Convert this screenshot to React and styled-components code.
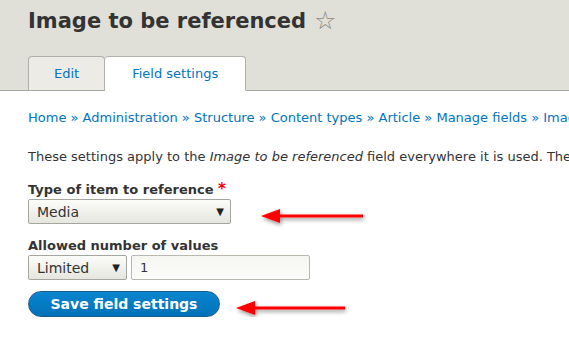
import React from "react";
import styled, { createGlobalStyle } from "styled-components";

const GlobalStyle = createGlobalStyle`
    body {
        margin: 0;
        background: #fff;
        font-family: "DejaVu Sans", "Liberation Sans", sans-serif;
        color: #333;
        overflow: hidden;
    }
`;

// red annotation arrow, its middle sits 17px down from the top of the row
function Arrow({ length }) {
    return (
        <ArrowSvg width={length + 8} height="25" viewBox={`0 0 ${length + 8} 25`}>
            <defs>
                <filter id="shadow" x="-20%" y="-80%" width="140%" height="260%">
                    <feDropShadow dx="1" dy="2" stdDeviation="2" floodColor="#000" floodOpacity="0.45" />
                </filter>
            </defs>
            <g filter="url(#shadow)">
                <rect x="16" y="15.5" width={length - 14} height="3" fill="#f00" />
                <polygon points="2,17 21,10 21,24" fill="#f00" />
            </g>
        </ArrowSvg>
    );
}

function App() {
    return (
        <>
            <GlobalStyle />
            <Header>
                <Title>
                    Image to be referenced <Star>☆</Star>
                </Title>
                <Tabs>
                    <Tab>Edit</Tab>
                    <Tab active>Field settings</Tab>
                </Tabs>
            </Header>
            <Content>
                <Breadcrumb>
                    Home » Administration » Structure » Content types » Article » Manage fields » Image to be referenced
                </Breadcrumb>
                <Description>
                    These settings apply to the <em>Image to be referenced</em> field everywhere it is used. These settings impact the way that data is stored
                </Description>
                <Label>
                    Type of item to reference <Required>*</Required>
                </Label>
                <Row>
                    <Select width="203px">
                        Media <Caret>▼</Caret>
                    </Select>
                    <ArrowSlot left="28px">
                        <Arrow length={102} />
                    </ArrowSlot>
                </Row>
                <Label top="13px">Allowed number of values</Label>
                <Row gap="4px">
                    <Select width="99px">
                        Limited <Caret>▼</Caret>
                    </Select>
                    <Input>1</Input>
                </Row>
                <Row top="11px">
                    <SaveButton>Save field settings</SaveButton>
                    <ArrowSlot left="14px">
                        <Arrow length={109} />
                    </ArrowSlot>
                </Row>
            </Content>
        </>
    );
}

export default App;

const Header = styled.div`
    background: #e0e0d8;
    border-bottom: 1px solid #a6a6a6;
    padding: 8px 0 0 28px;
    height: 82px;
    display: flex;
    flex-direction: column;
    justify-content: space-between;
    box-sizing: content-box;
`;

const Title = styled.h1`
    margin: 0;
    font-size: 21px;
    font-weight: bold;
    color: #333;
    line-height: 26px;
    white-space: nowrap;
    display: flex;
    align-items: center;
    gap: 8px;
`;

const Star = styled.span`
    font-weight: normal;
    color: #8a8a86;
    font-size: 25px;
    line-height: 26px;
`;

const Tabs = styled.div`
    display: flex;
    margin-bottom: -1px;
`;

const Tab = styled.div`
    height: 33px;
    line-height: 33px;
    padding: 0 ${(p) => (p.active ? "27px" : "25px")};
    font-size: 13px;
    color: #0074bd;
    background: ${(p) => (p.active ? "#fff" : "#ecebe6")};
    border: 1px solid #b0b0aa;
    border-bottom: ${(p) => (p.active ? "1px solid #fff" : "1px solid #a6a6a6")};
    border-left: ${(p) => (p.active ? "none" : "1px solid #b0b0aa")};
    border-radius: 4px 4px 0 0;
`;

const Content = styled.div`
    padding: 18px 0 0 28px;
    white-space: nowrap;
    font-size: 13px;
    overflow: hidden;
`;

const Breadcrumb = styled.div`
    color: #0074bd;
    line-height: 18px;
`;

const Description = styled.p`
    margin: 21px 0 0;
    line-height: 18px;
`;

const Label = styled.div`
    margin-top: ${(p) => p.top || "14px"};
    font-weight: bold;
    line-height: 18px;
`;

const Required = styled.span`
    color: #e00;
    font-size: 15px;
`;

const Row = styled.div`
    display: flex;
    align-items: flex-start;
    gap: ${(p) => p.gap || "0"};
    margin-top: ${(p) => p.top || "0"};
`;

const Select = styled.div`
    width: ${(p) => p.width};
    height: 25px;
    box-sizing: border-box;
    display: flex;
    align-items: center;
    justify-content: space-between;
    padding: 0 6px 0 8px;
    border: 1px solid #a6a6a0;
    border-radius: 2px;
    background: linear-gradient(#fcfcfa, #e6e6df);
    font-size: 14px;
    color: #333;
`;

const Caret = styled.span`
    font-size: 10px;
    color: #222;
`;

const Input = styled.div`
    width: 179px;
    height: 25px;
    box-sizing: border-box;
    display: flex;
    align-items: center;
    padding: 0 8px;
    border: 1px solid #b8b8b0;
    border-radius: 2px;
    background: linear-gradient(#f5f5f2, #fcfcfa);
    font-size: 13px;
`;

const ArrowSlot = styled.div`
    margin-left: ${(p) => p.left};
    display: flex;
`;

const ArrowSvg = styled.svg`
    overflow: visible;
`;

const SaveButton = styled.div`
    width: 192px;
    height: 26px;
    box-sizing: border-box;
    display: flex;
    align-items: center;
    justify-content: center;
    border-radius: 13px;
    border: 1px solid #1e5c90;
    background: linear-gradient(#0a85cf, #0071b8);
    color: #fff;
    font-weight: bold;
    font-size: 14px;
`;
